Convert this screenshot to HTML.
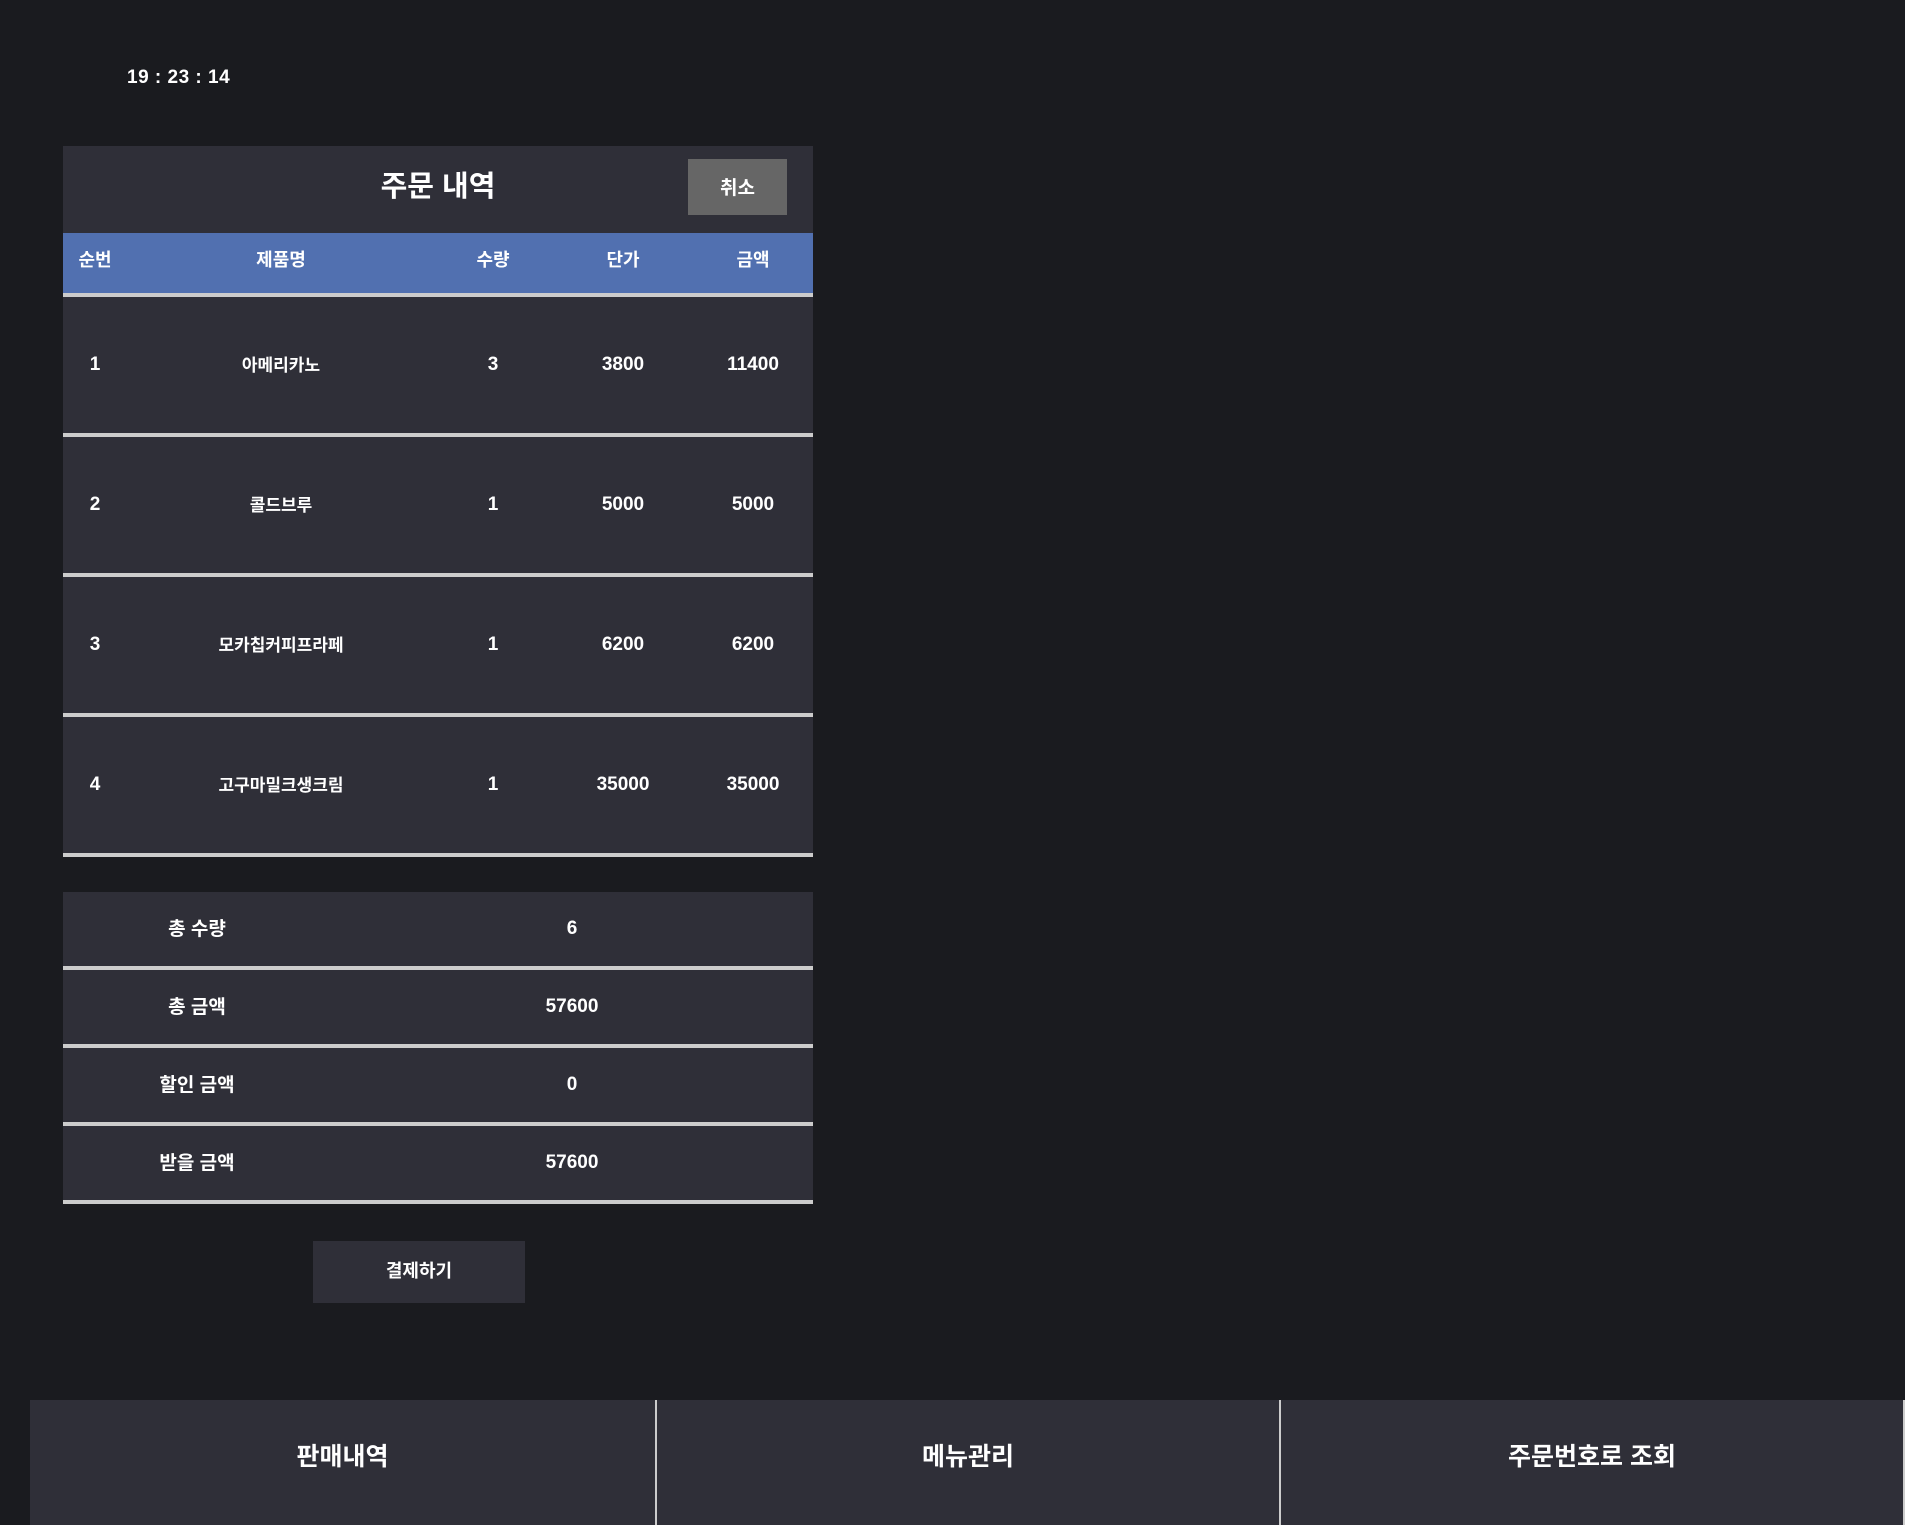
<!DOCTYPE html>
<html><head><meta charset="utf-8"><style>
*{margin:0;padding:0;box-sizing:border-box}
body{width:1905px;height:1525px;background:#1a1b1f;position:relative;overflow:hidden;font-family:"Liberation Sans","Noto Sans CJK KR",sans-serif;color:#fff;font-weight:bold}
.abs{position:absolute}
.c{display:flex;align-items:center;justify-content:center}
.clock{left:127px;top:67px;font-size:19px;letter-spacing:0.5px}
.panel{left:63px;top:146px;width:750px;height:711px;background:#2f2f38}
.title{left:0;top:0;width:750px;height:76px;font-size:29px}
.cancel{left:625px;top:13px;width:99px;height:56px;background:#666;font-size:19px;padding-bottom:2px}
.head{left:0;top:87px;width:750px;height:64px;background:#5170b0;font-size:18px;border-bottom:4px solid #ccc}
.row{left:0;width:750px;height:140px;border-bottom:4px solid #ccc;font-size:19px}
.cell{position:absolute;top:0;height:100%;width:120px;margin-left:-60px;display:flex;align-items:center;justify-content:center}
.k{padding-bottom:4px}
.head .cell{align-items:flex-start;padding-top:13px}
.sum{left:63px;width:750px;height:78px;background:#2f2f38;border-bottom:4px solid #ccc;font-size:19px}
.pay{left:313px;top:1241px;width:212px;height:62px;background:#2f2f38;font-size:18px;padding-bottom:5px}
.nav{top:1400px;height:125px;background:#2f2f38;font-size:25px;padding-bottom:16px}
</style></head><body>
<div class="abs clock">19 : 23 : 14</div>
<div class="abs panel">
  <div class="abs title c">주문 내역</div>
  <div class="abs cancel c">취소</div>
  <div class="abs head">
    <div class="cell" style="left:32px">순번</div>
    <div class="cell" style="left:218px">제품명</div>
    <div class="cell" style="left:430px">수량</div>
    <div class="cell" style="left:560px">단가</div>
    <div class="cell" style="left:690px">금액</div>
  </div>
  <div class="abs row" style="top:151px">
    <div class="cell" style="left:32px">1</div><div class="cell k" style="left:218px;font-size:17px">아메리카노</div><div class="cell" style="left:430px">3</div><div class="cell" style="left:560px">3800</div><div class="cell" style="left:690px">11400</div>
  </div>
  <div class="abs row" style="top:291px">
    <div class="cell" style="left:32px">2</div><div class="cell k" style="left:218px;font-size:17px">콜드브루</div><div class="cell" style="left:430px">1</div><div class="cell" style="left:560px">5000</div><div class="cell" style="left:690px">5000</div>
  </div>
  <div class="abs row" style="top:431px">
    <div class="cell" style="left:32px">3</div><div class="cell k" style="left:218px;font-size:17px;width:160px;margin-left:-80px">모카칩커피프라페</div><div class="cell" style="left:430px">1</div><div class="cell" style="left:560px">6200</div><div class="cell" style="left:690px">6200</div>
  </div>
  <div class="abs row" style="top:571px">
    <div class="cell" style="left:32px">4</div><div class="cell k" style="left:218px;font-size:17px;width:160px;margin-left:-80px">고구마밀크생크림</div><div class="cell" style="left:430px">1</div><div class="cell" style="left:560px">35000</div><div class="cell" style="left:690px">35000</div>
  </div>
</div>
<div class="abs sum" style="top:892px"><div class="cell k" style="left:134px">총 수량</div><div class="cell" style="left:509px">6</div></div>
<div class="abs sum" style="top:970px"><div class="cell k" style="left:134px">총 금액</div><div class="cell" style="left:509px">57600</div></div>
<div class="abs sum" style="top:1048px"><div class="cell k" style="left:134px">할인 금액</div><div class="cell" style="left:509px">0</div></div>
<div class="abs sum" style="top:1126px"><div class="cell k" style="left:134px">받을 금액</div><div class="cell" style="left:509px">57600</div></div>
<div class="abs pay c">결제하기</div>
<div class="abs nav c" style="left:30px;width:625px">판매내역</div>
<div class="abs nav c" style="left:657px;width:622px">메뉴관리</div>
<div class="abs nav c" style="left:1281px;width:622px">주문번호로 조회</div>
<div class="abs" style="left:655px;top:1400px;width:2px;height:125px;background:#ccc"></div>
<div class="abs" style="left:1279px;top:1400px;width:2px;height:125px;background:#ccc"></div>
<div class="abs" style="left:1903px;top:1400px;width:2px;height:125px;background:#ccc"></div>
</body></html>
